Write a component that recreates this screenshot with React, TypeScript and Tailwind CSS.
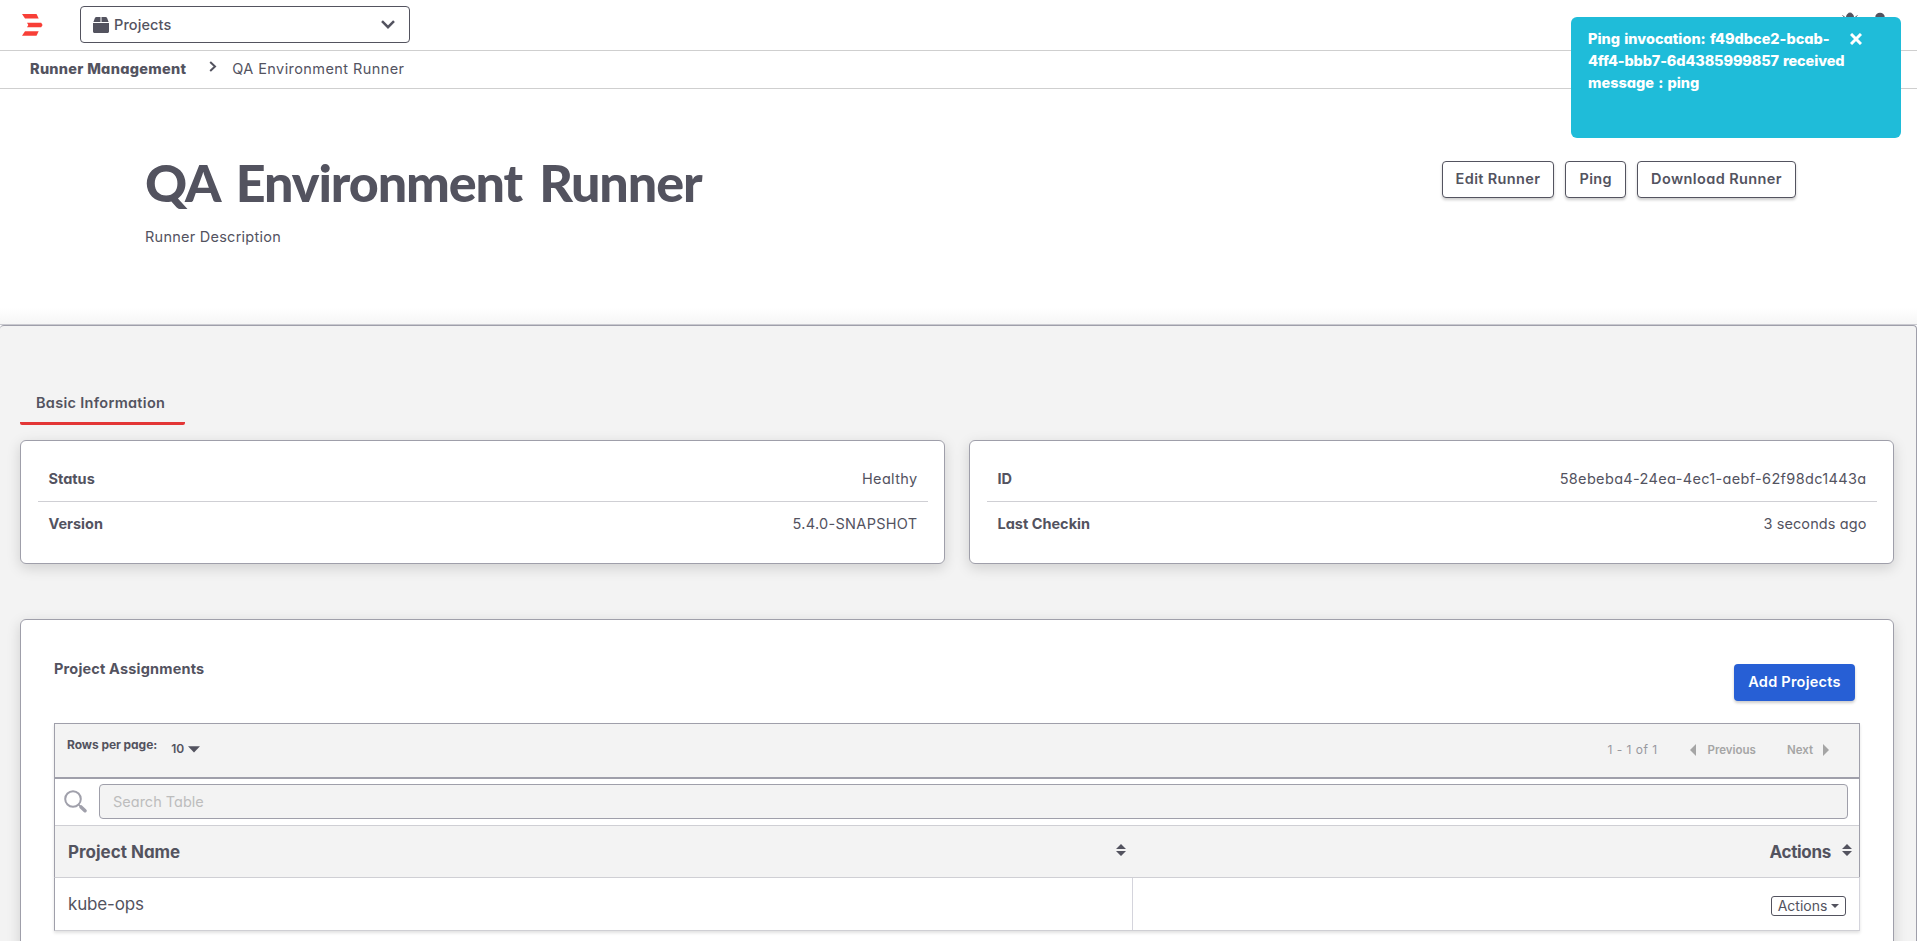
import type { ReactNode } from "react";

function LogoMark() {
  return (
    <svg width="21" height="22" viewBox="0 0 21 22" fill="#f83f37">
      <path d="M0 0h14.5l2.2 4.6H3z" />
      <path d="M5 8.8h14.2L20.6 11l-1.4 2.2H5L6.3 11z" />
      <path d="M3 17.2h13.7L14.5 21.8H0z" />
    </svg>
  );
}

function BoxIcon() {
  return (
    <svg width="16" height="16" viewBox="0 0 16 16" fill="#53535f">
      <path d="M3.4 0h4.1v5H.4l1.5-4C2.2.3 2.7 0 3.4 0zM8.5 0h4.1c.7 0 1.2.3 1.500 1l1.500 4H8.500zM0 6h16v8.500c0 .8-.7 1.500-1.500 1.500h-13C.7 16 0 15.300 0 14.500z" />
    </svg>
  );
}

function SearchIcon() {
  return (
    <svg width="24" height="24" viewBox="0 0 24 24" fill="none" stroke="#a0a0ab">
      <circle cx="9" cy="9" r="7.800" strokeWidth="2" />
      <path d="M14.500 14.500l2.500 2.500" strokeWidth="1.600" />
      <path d="M17 17l4 3.700" strokeWidth="3.600" strokeLinecap="round" />
    </svg>
  );
}

function SortIcon() {
  return (
    <svg width="10" height="12" viewBox="0 0 10 12" fill="#53535f">
      <path d="M5 0l5 5H0zM5 12L0 7h10z" />
    </svg>
  );
}

function OutlineButton({ children }: { children: ReactNode }) {
  return (
    <button className="flex h-[37px] items-center justify-center rounded border border-[#53535f] bg-white px-[13px] pb-[2px] font-semibold shadow-[0_2px_3px_rgba(0,0,0,0.2)]">
      {children}
    </button>
  );
}

function InfoCard({ children }: { children: ReactNode }) {
  return (
    <section className="h-[124px] flex-1 rounded-md border border-[#9f9faa] bg-white pl-[17px] pr-[16px] pt-[15px] shadow-[0_4px_14px_rgba(0,0,0,0.15)]">
      {children}
    </section>
  );
}

function InfoRow({ label, value, divider }: { label: string; value: ReactNode; divider?: boolean }) {
  return (
    <div className={divider ? "border-b border-[#cfcfd4]" : "pb-[2px]"}>
      <div className={divider ? "flex h-[45px] items-center justify-between px-[10.5px]" : "flex h-[43px] items-center justify-between px-[10.5px]"}>
        <span className="font-bold">{label}</span>
        {value}
      </div>
    </div>
  );
}

function TopBar() {
  return (
    <header className="flex h-[51px] items-start border-b border-[#cfcfcf] bg-white">
      <div className="ml-[22px] mt-[14px] w-[58px]">
        <LogoMark />
      </div>
      <button className="mt-[6px] flex h-[37px] w-[330px] items-center rounded-[4px] border border-[#53535f] pl-[12px] pr-[14px]">
        <BoxIcon />
        <span className="ml-[5px] flex-1 text-left font-medium tracking-[0.1px]">Projects</span>
        <svg width="14" height="9" viewBox="0 0 14 9" fill="none" stroke="#53535f" strokeWidth="2.5">
          <path d="M1 1.200l6 6 6-6" />
        </svg>
      </button>
      <div className="ml-auto mr-[29px] mt-[12px] flex gap-[14px] text-[#53535f]">
        <svg width="16" height="18" viewBox="0 0 16 18" fill="currentColor">
          <path d="M4.500 5.500C4.500 2.800 6 1 8 1s3.500 1.800 3.500 4.500zM3 6h10v6a5 5 0 0 1-10 0zM.5 3.500l3 2.300M15.500 3.500l-3 2.300" stroke="currentColor" />
        </svg>
        <svg width="16" height="18" viewBox="0 0 16 18" fill="currentColor">
          <circle cx="8" cy="5.500" r="4.800" />
          <path d="M1 18c0-5 3-7 7-7s7 2 7 7z" />
        </svg>
      </div>
    </header>
  );
}

function Breadcrumbs() {
  return (
    <nav className="flex h-[38px] items-center border-b border-[#cfcfcf] bg-white pb-[2px] pl-[30px]">
      <span className="font-extrabold tracking-[0.28px]">Runner Management</span>
      <svg className="mb-[4px] ml-[23px] mr-[15px]" width="8" height="11" viewBox="0 0 8 11" fill="none" stroke="#53535f" strokeWidth="2">
        <path d="M1.200 1l4.800 4.500-4.800 4.500" />
      </svg>
      <span className="tracking-[0.42px]">QA Environment Runner</span>
    </nav>
  );
}

function Hero() {
  return (
    <section className="flex h-[235px] items-start justify-between bg-linear-to-b from-white from-93% to-[#f6f6f6] pl-[145px] pr-[121px]">
      <div>
        <h1 className="mt-[61px] font-['Lato',sans-serif] text-[52px] font-black leading-[64px] tracking-[-1.1px] [word-spacing:6px]">
          QA Environment Runner
        </h1>
        <p className="mt-[13px] leading-5 tracking-[0.25px]">Runner Description</p>
      </div>
      <div className="mt-[72px] flex gap-[11px]">
        <OutlineButton>
          <span className="tracking-[0.36px]">Edit Runner</span>
        </OutlineButton>
        <OutlineButton>
          <span className="tracking-[0.4px]">Ping</span>
        </OutlineButton>
        <OutlineButton>
          <span className="tracking-[0.4px]">Download Runner</span>
        </OutlineButton>
      </div>
    </section>
  );
}

function Toolbar() {
  return (
    <div className="flex h-[55px] items-start border-b-2 border-[#9f9faa] bg-[#f3f3f3] pl-[12px] pr-[30px] text-[12px] leading-4">
      <span className="mt-[13px] font-bold tracking-[-0.06px]">Rows per page:</span>
      <span className="ml-[14px] mt-[17px] font-semibold">10</span>
      <svg className="ml-[4px] mt-[22px]" width="12" height="7" viewBox="0 0 12 7" fill="#53535f">
        <path d="M0 .3h12L6 6.500z" />
      </svg>
      <div className="ml-auto mt-[18px] flex items-center text-[#98989f]">
        <span className="tracking-[0.47px]">1 - 1 of 1</span>
        <svg className="ml-[33px] mr-[11px]" width="6" height="12" viewBox="0 0 6 12" fill="#a5a5a5">
          <path d="M6 0v12L0 6z" />
        </svg>
        <span className="text-[11.5px] font-semibold text-[#a5a5a5]">Previous</span>
        <span className="ml-[31px] text-[11.5px] font-semibold text-[#a5a5a5]">Next</span>
        <svg className="ml-[10px]" width="6" height="12" viewBox="0 0 6 12" fill="#a5a5a5">
          <path d="M0 0v12l6-6z" />
        </svg>
      </div>
    </div>
  );
}

function ProjectTable() {
  return (
    <div className="mx-[33px] mt-[22px] shadow-[0_2px_3px_rgba(0,0,0,0.12)]">
      <div className="border-x border-t border-[#9f9faa]">
        <Toolbar />
        <div className="flex h-[46px] items-start pl-[9px] pr-[11px] pt-[5px]">
          <div className="mt-[6px] w-[35px]">
            <SearchIcon />
          </div>
          <input
            className="h-[35px] flex-1 rounded border border-[#9f9faa] bg-[#f3f3f3] px-[13px] placeholder:text-[#bdbdbd]"
            placeholder="Search Table"
          />
        </div>
        <div className="flex h-[52px] items-center border-t border-[#cfcfd4] bg-[#f3f3f3] text-[17px] font-bold">
          <div className="flex w-[1078px] items-center pl-[13px] pr-[7px]">
            <span className="flex-1 pt-[2px]">Project Name</span>
            <span className="mb-[4px]">
              <SortIcon />
            </span>
          </div>
          <div className="flex flex-1 items-center justify-end gap-[11px] pr-[7px]">
            <span className="pt-[2px] tracking-[-0.3px]">Actions</span>
            <span className="mb-[4px]">
              <SortIcon />
            </span>
          </div>
        </div>
      </div>
      <div className="flex h-[54px] border border-l-[#9f9faa] border-r-[#d4d4dc] border-y-[#cfcfd4]">
        <div className="flex w-[1078px] items-center border-r border-[#d4d4dc] pl-[13px] pt-[2px] text-[17px] tracking-[-0.15px]">
          kube-ops
        </div>
        <div className="flex flex-1 items-center justify-end pr-[13px] pt-[3px]">
          <button className="flex h-[20px] w-[75px] items-center justify-center gap-[4px] rounded-[3px] border border-[#53535f] text-[14px] leading-none">
            Actions
            <svg width="8" height="4" viewBox="0 0 8 4" fill="#53535f">
              <path d="M0 0h8L4 4z" />
            </svg>
          </button>
        </div>
      </div>
    </div>
  );
}

function Toast() {
  return (
    <aside className="absolute right-[16px] top-[17px] flex h-[121px] w-[330px] items-start rounded-md bg-[#1fbcd9] pl-[17px] pt-[11px] text-white">
      <p className="w-[262px] whitespace-nowrap font-extrabold leading-[22px] [word-spacing:1px]">
        <span className="block">Ping invocation: f49dbce2-bcab-</span>
        <span className="block tracking-[-0.14px]">4ff4-bbb7-6d4385999857 received</span>
        <span className="block">message : ping</span>
      </p>
      <svg className="mt-[5px]" width="12" height="12" viewBox="0 0 12 12" stroke="#fff" strokeWidth="3">
        <path d="M1 1l10 10M11 1L1 11" />
      </svg>
    </aside>
  );
}

export default function App() {
  return (
    <div className="relative h-[941px] overflow-hidden bg-white font-['Inter','Open_Sans',sans-serif] text-[14.5px] text-[#53535f] [font-feature-settings:'cv11']">
      <TopBar />
      <Breadcrumbs />
      <Hero />
      <div className="border-t border-[#c9c9cf]">
        <main className="h-[640px] rounded-t-[4px] border-r border-t border-[#9f9faa] bg-[#f3f3f3] pl-[20px] pr-[22px] pt-[63px]">
          <div className="flex h-[36px] w-[165px] items-start rounded-[2px] border-b-[3px] border-[#e33636] pl-[16px] pt-[4px] font-semibold leading-5 tracking-[0.3px]">
            Basic Information
          </div>
          <div className="mt-[15px] flex gap-[24px]">
            <InfoCard>
              <InfoRow divider label="Status" value={<span className="tracking-[0.35px]">Healthy</span>} />
              <InfoRow label="Version" value={<span className="tracking-[0.3px]">5.4.0-SNAPSHOT</span>} />
            </InfoCard>
            <InfoCard>
              <InfoRow
                divider
                label="ID"
                value={<span className="tracking-[0.34px]">58ebeba4-24ea-4ec1-aebf-62f98dc1443a</span>}
              />
              <InfoRow label="Last Checkin" value={<span className="tracking-[0.1px]">3 seconds ago</span>} />
            </InfoCard>
          </div>
          <section className="mt-[55px] h-[400px] rounded-t-md border border-[#9f9faa] bg-white shadow-[0_4px_14px_rgba(0,0,0,0.15)]">
            <div className="flex items-start justify-between pl-[33px] pr-[38px]">
              <h2 className="mt-[39px] font-bold leading-5 tracking-[0.18px]">Project Assignments</h2>
              <button className="mt-[44px] flex h-[37px] w-[121px] items-center justify-center rounded bg-[#275fd5] pb-[2px] font-semibold tracking-[0.25px] text-white shadow-[0_2px_3px_rgba(0,0,0,0.2)]">
                Add Projects
              </button>
            </div>
            <ProjectTable />
          </section>
        </main>
      </div>
      <Toast />
    </div>
  );
}
